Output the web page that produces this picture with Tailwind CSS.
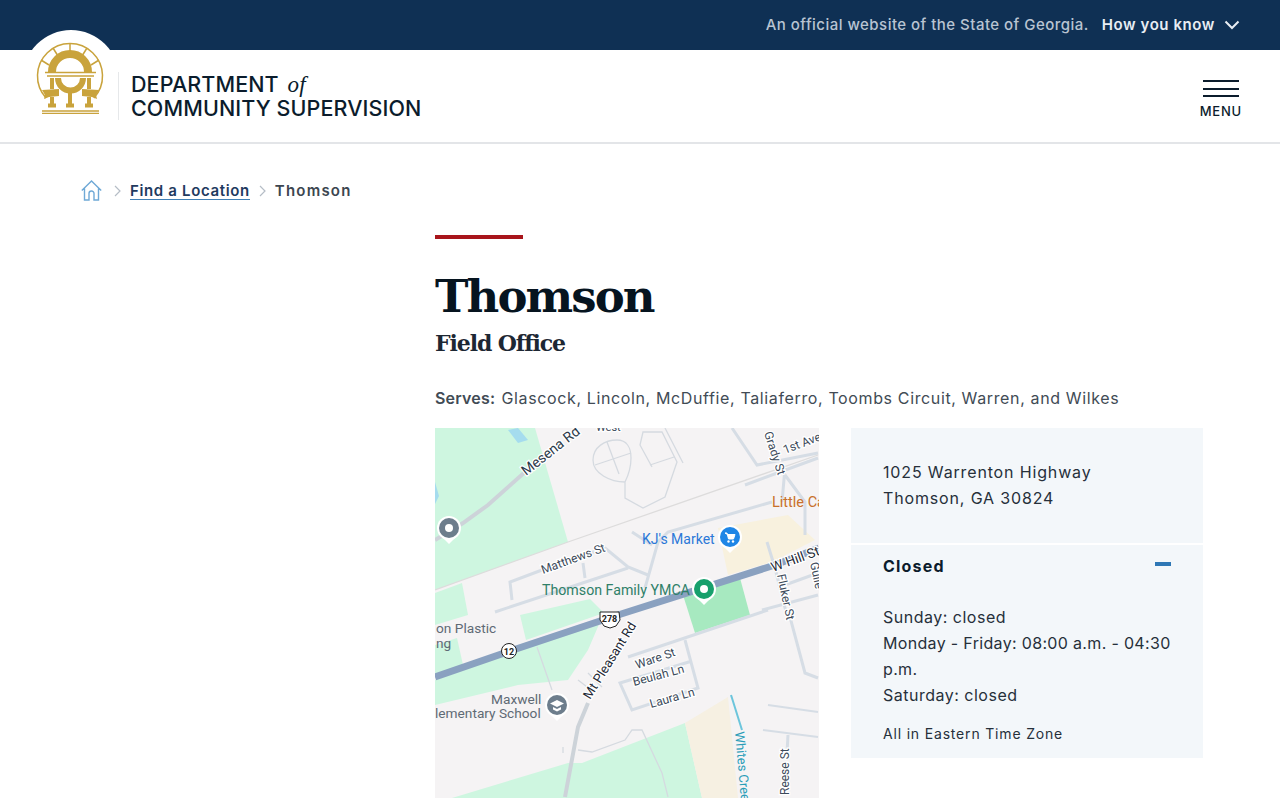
<!DOCTYPE html>
<html lang="en">
<head>
    <meta charset="UTF-8" />
    <title>Thomson - Department of Community Supervision</title>
    <script src="https://cdn.jsdelivr.net/npm/@tailwindcss/browser@4"></script>
</head>
<body class="bg-white text-[#0b1c2c] font-['Inter',sans-serif] h-[800px] overflow-hidden">

<!-- top bar -->
<div class="bg-[#0f3054] h-[50px] flex items-center justify-end pr-[40px] text-[15px]">
    <span class="text-[#b9c4d2] font-medium tracking-[0.47px]">An official website of the State of Georgia.</span>
    <span class="text-[#e8edf3] font-semibold ml-[13px] tracking-[0.58px]">How you know</span>
    <svg class="ml-[9px]" width="16" height="10" viewBox="0 0 16 10" fill="none" stroke="#e8edf3" stroke-width="2"><path d="M1.5 1.5 8 8l6.5-6.5"/></svg>
</div>

<!-- header -->
<header class="relative h-[94px] border-b-2 border-[#e3e5e8] flex items-center justify-between pl-[118px] pr-[38px]">
    <div class="absolute left-[23px] top-[-20px] w-[96px] h-[96px] rounded-full bg-white"></div>
    <svg class="absolute left-[34px] top-[-10px]" width="72" height="76" viewBox="34 40 72 76" fill="none" stroke="#c9a33c">
        <path d="M46 98A32.500 32.500 0 1 1 94 98" stroke-width="1.500"/>
        <path d="M70 43v9M53 48l5 8M87 48l-5 8M41 60l8 5M99 60l-8 5" stroke-width="1.500"/>
        <path d="M52 72A18 18 0 0 1 88 72" stroke-width="8"/>
        <path d="M45 72.500h51M47 76h47" stroke-width="1.500"/>
        <path d="M58 78a12.500 12.500 0 0 0 25 0" stroke-width="6"/>
        <path d="M52 78v11M52 97v7M70 88v16M89 78v11M89 97v7" stroke-width="4"/>
        <path d="M48 105.500h8M66 105.500h8M85 105.500h8" stroke-width="4"/>
        <path d="M42 111h57M42 113.300h57" stroke-width="1.300"/>
        <path d="M42 90l17-1v7l-10 1-5 2 1-4zM99 90l-17-1v7l10 1 5 2-1-4z" fill="#c9a33c" stroke="none"/>
    </svg>
    <div class="relative flex items-center h-[48px] border-l border-[#e6e8ea] pl-[12px]">
        <div class="text-[21.500px] leading-[24px] font-medium tracking-[0.1px] text-[#0b1c2c] whitespace-nowrap">
            <div class="h-[24px]">DEPARTMENT <span class="font-['Liberation_Serif',serif] italic ml-[3px] text-[23px] leading-none">of</span></div>
            <div>COMMUNITY SUPERVISION</div>
        </div>
    </div>
    <div class="flex flex-col items-center mt-[7px]">
        <div class="w-[36px] h-[17px] border-y-2 border-[#0b1c2c] flex items-center">
            <div class="w-full h-[2px] bg-[#0b1c2c]"></div>
        </div>
        <div class="text-[13px] leading-[16px] font-medium tracking-[0.8px] mt-[6px]">MENU</div>
    </div>
</header>

<!-- breadcrumb -->
<nav class="flex items-center h-[91px] pl-[81px] pt-[3px] text-[15px] font-semibold">
    <svg width="21" height="21" viewBox="0 0 21 21" fill="none" stroke="#6fa9d6" stroke-width="1.400" class="-mt-[1px]">
        <path d="M.8 10.500 10.500 1l9.700 9.500M3.500 8.500V20h4.500v-6.500a2.500 2.500 0 0 1 5 0V20h4.500V8.500"/>
    </svg>
    <svg class="ml-[12px]" width="8" height="12" viewBox="0 0 8 12" fill="none" stroke="#b5bdc6" stroke-width="1.200"><path d="M1 1l5 5-5 5"/></svg>
    <a class="ml-[8px] text-[#1f3a5f] border-b border-[#3f7fb5] leading-[17px] tracking-[0.65px]">Find a Location</a>
    <svg class="ml-[9px]" width="8" height="12" viewBox="0 0 8 12" fill="none" stroke="#b5bdc6" stroke-width="1.200"><path d="M1 1l5 5-5 5"/></svg>
    <span class="ml-[8px] text-[#3c4650] tracking-[1.2px]">Thomson</span>
</nav>

<!-- main -->
<main class="ml-[435px] w-[768px]">
    <div class="w-[88px] h-[4px] bg-[#a8151b]"></div>
    <h1 class="mt-[28px] font-['DejaVu_Serif',serif] font-bold text-[45px] leading-[60px] tracking-[-1.9px] text-[#06141f]">Thomson</h1>
    <h2 class="font-['DejaVu_Serif',serif] font-bold text-[22px] leading-[30px] tracking-[-1.1px] text-[#1d2733] mt-[1px]">Field Office</h2>
    <p class="mt-[28px] text-[16px] leading-[24px] text-[#414b55] tracking-[0.63px] whitespace-nowrap"><span class="font-semibold mr-[1px] tracking-[0.2px]">Serves:</span> <span>Glascock, Lincoln, McDuffie, Taliaferro, Toombs Circuit, Warren, and Wilkes</span></p>

    <div class="mt-[18px] flex gap-[32px]">
        <!-- map -->
        <svg class="w-[384px] h-[370px] shrink-0 bg-[#f5f3f4]" viewBox="435 428 384 370" font-family="Roboto, sans-serif">
            <g fill="#cef6e0">
                <path d="M435 428h100l33 114-133 48z"/>
                <path d="M435 593l27-10 6 32-33 10z"/>
                <path d="M435 645l22-7 6 27-28 10z"/>
                <path d="M520 615l70-16 14 14-78 27z"/>
                <path d="M435 680l165-58-12 28-20 30-50 5-83 20z"/>
                <path d="M452 798l116-35h14l103-40 17 75z"/>
            </g>
            <path d="M685 723l43-26 10 101h-36z" fill="#f6f0e2"/>
            <path d="M718 528l70-13 27 25-43 22-44 13z" fill="#f8f1de"/>
            <path d="M683 595l57-17 10 37-55 18z" fill="#a7e9c0"/>
            <path d="M508 430l10-2 10 12-10 3z" fill="#a5dcee"/>
            <path d="M435 482l4 14-4 8z" fill="#a5dcee"/>

            <!-- roads -->
            <g fill="none" stroke="#d6dde5" stroke-width="3">
                <path d="M435 540l28-17 25-18 37-33" stroke="#cdd3d9" stroke-width="4"/>
                <path d="M512 600l-2-18 32-12 63-22 23 19 20 8M495 612l133-44M583 563l2 15"/>
                <path d="M645 588l13-46 10-10 104-30M632 532l20 13"/>
                <path d="M732 428l25 37 61-12M745 485l73-27"/>
                <path d="M785 468l-3 34M785 475l20 27v33"/>
                <path d="M767 542l8 26 10 40 5 9 15 56 13 5"/>
                <path d="M785 585l33-12M762 610l56-15"/>
                <path d="M628 657l140-47M685 640l13 48-66 22-12-27 72-22"/>
                <path d="M768 705l50 7M763 730l55 7" stroke-width="2"/>
                <path d="M788 735l-1 18"/>
                <path d="M588 703l-10 24-13 70" stroke="#cdd3d9" stroke-width="4"/>
            </g>
            <g fill="none" stroke="#d5dae0" stroke-width="1.300">
                <path d="M625 482c-14 0-32-8-32-22 0-13 12-20 24-20 10 0 14 8 14 18 0 10-3 18-6 24v16l18 10 22-11 12-35-15-30h-19l-3 13 12 22"/>
                <path d="M595 465l36-12M607 442l12 32M650 465l24-8M665 428l18 35"/>
                <path d="M435 590l133-48 250-87" stroke="#dddcdc"/>
                <path d="M537 647l15 43M578 680l17 13M588 673l14 14M563 747v6"/>
                <path d="M578 750l14 2 33-12 7-10h10l20 43 6 24"/>
            </g>
            <path d="M435 677l75-26 108-36 157-50 44-17" fill="none" stroke="#8aa1c0" stroke-width="7"/>
            <path d="M731 695l11 35" fill="none" stroke="#6cc5dc" stroke-width="2"/>

            <g fill="#5f6a75" font-size="13.700">
                <text x="436" y="633">on Plastic</text><text x="436" y="648">ng</text>
                <text x="491" y="704">Maxwell</text><text x="435" y="718">lementary School</text>
            </g>
            <g fill="#3c4a5a" font-size="12" stroke="#fff" stroke-width="2.500" paint-order="stroke">
                <text transform="translate(526 476) rotate(-38)" font-size="14" fill="#2c3a4a">Mesena Rd</text>
                <text x="596" y="431" font-size="11">West</text>
                <text transform="translate(764 433) rotate(72)">Grady St</text>
                <text transform="translate(785 454) rotate(-21)">1st Ave</text>
                <text transform="translate(543 574) rotate(-20)">Matthews St</text>
                <text transform="translate(773 572) rotate(-20)" fill="#1f2a36" font-size="13.500">W Hill St</text>
                <text transform="translate(777 575) rotate(78)">Fluker St</text>
                <text transform="translate(810 563) rotate(78)">Gulle</text>
                <text transform="translate(637 669) rotate(-19)">Ware St</text>
                <text transform="translate(634 686) rotate(-15)">Beulah Ln</text>
                <text transform="translate(651 708) rotate(-16)">Laura Ln</text>
                <text transform="translate(590 700) rotate(-58)" fill="#1f2a36" font-size="13">Mt Pleasant Rd</text>
                <text transform="translate(789 795) rotate(-90)">Reese St</text>
            </g>
            <text x="772" y="507" fill="#c8702a" font-size="14.500">Little Ca</text>
            <text x="642" y="544" fill="#2b78d8" font-size="14">KJ's Market</text>
            <text x="542" y="595" fill="#2f8068" font-size="14.200">Thomson Family YMCA</text>
            <text transform="translate(735 732) rotate(85)" fill="#2a9db8" font-size="13">Whites Creek</text>

            <!-- pins -->
            <g transform="translate(449 528)">
                <path d="M-9 7 0 16 9 7z" fill="#fff"/><circle r="12" fill="#fff"/><circle r="10" fill="#6d7d8c"/><circle r="4" fill="#fff"/>
            </g>
            <g transform="translate(730 537)">
                <path d="M-9 7 0 16 9 7z" fill="#fff"/><circle r="12" fill="#fff"/><circle r="10" fill="#1f86e6"/>
                <path d="M-5-4h2l1.500 6h5l1.500-4.500h-7.500z" fill="#fff" stroke="#fff"/><circle cx="-1.500" cy="4.500" r="1.200" fill="#fff"/><circle cx="3" cy="4.500" r="1.200" fill="#fff"/>
            </g>
            <g transform="translate(704 589)">
                <path d="M-9 7 0 16 9 7z" fill="#fff"/><circle r="12" fill="#fff"/><circle r="10" fill="#17a06c"/><circle r="4" fill="#fff"/>
            </g>
            <g transform="translate(557 705)">
                <path d="M-9 7 0 16 9 7z" fill="#fff"/><circle r="12" fill="#fff"/><circle r="10" fill="#6d7d8c"/>
                <path d="M0-5 7-1.500 0 2-7-1.500zM-4 2v2.500L0 6.500 4 4.500V2L0 4z" fill="#fff"/>
            </g>

            <!-- road shields -->
            <path d="M600 612h19l1 8-4 6-6 2-6-2-4-6z" fill="#fff" stroke="#222" stroke-width="1"/>
            <text x="609.500" y="622" font-size="9" font-weight="700" text-anchor="middle" fill="#222">278</text>
            <circle cx="509" cy="651" r="7.500" fill="#fff" stroke="#222"/>
            <text x="509" y="654.500" font-size="9" font-weight="700" text-anchor="middle" fill="#222">12</text>
        </svg>

        <!-- info card -->
        <aside class="w-[352px] h-[330px] bg-[#f3f7fa] tracking-[0.5px] text-[16px] leading-[26px] text-[#26303a]">
            <div class="px-[32px] pt-[31px] pb-[32px] border-b-2 border-white tracking-[0.85px]">
                <div>1025 Warrenton Highway</div>
                <div>Thomson, GA 30824</div>
            </div>
            <div class="px-[32px] pt-[7px]">
                <div class="flex items-center justify-between h-[26px] mt-[1px]">
                    <span class="font-bold text-[#0b1c2c] tracking-[1.2px]">Closed</span>
                    <span class="w-[16px] h-[4px] -mt-[4px] bg-[#2e77b5]"></span>
                </div>
                <div class="mt-[25px]">Sunday: closed</div>
                <div class="whitespace-nowrap tracking-[0.33px]">Monday - Friday: 08:00 a.m. - 04:30<br>p.m.</div>
                <div>Saturday: closed</div>
                <div class="text-[14px] mt-[14px] leading-[24px] tracking-[0.82px]">All in Eastern Time Zone</div>
            </div>
        </aside>
    </div>
</main>
</body>
</html>
